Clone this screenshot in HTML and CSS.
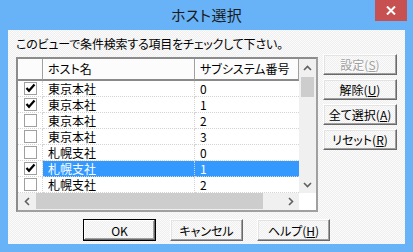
FILE: index.html
```html
<!DOCTYPE html>
<html lang="ja">
<head>
<meta charset="utf-8">
<title>ホスト選択</title>
<link rel="stylesheet" href="styles.css">
</head>
<body>
<div class="window">
  <div class="titlebar">
    <span class="title">ホスト選択</span>
    <button class="close" aria-label="閉じる">
      <svg width="10" height="9" viewBox="0 0 10 9"><path d="M1 0.5 L9 8.5 M9 0.5 L1 8.5" stroke="#fff" stroke-width="2" fill="none"/></svg>
    </button>
  </div>
  <div class="client">
    <div class="prompt">このビューで条件検索する項目をチェックして下さい。</div>
    <div class="main">
      <div class="list">
        <div class="view">
          <div class="row head">
            <div class="cell chk"></div>
            <div class="cell name">ホスト名</div>
            <div class="cell sub">サブシステム番号</div>
          </div>
          <div class="row">
            <div class="cell chk"><span class="box on"><svg viewBox="0 0 11 11"><path d="M1.5 5 L4 7.8 L9.5 1.5" /></svg></span></div>
            <div class="cell name">東京本社</div>
            <div class="cell sub">0</div>
          </div>
          <div class="row">
            <div class="cell chk"><span class="box on"><svg viewBox="0 0 11 11"><path d="M1.5 5 L4 7.8 L9.5 1.5" /></svg></span></div>
            <div class="cell name">東京本社</div>
            <div class="cell sub">1</div>
          </div>
          <div class="row">
            <div class="cell chk"><span class="box"></span></div>
            <div class="cell name">東京本社</div>
            <div class="cell sub">2</div>
          </div>
          <div class="row">
            <div class="cell chk"><span class="box"></span></div>
            <div class="cell name">東京本社</div>
            <div class="cell sub">3</div>
          </div>
          <div class="row">
            <div class="cell chk"><span class="box"></span></div>
            <div class="cell name">札幌支社</div>
            <div class="cell sub">0</div>
          </div>
          <div class="row selected">
            <div class="cell chk"><span class="box on"><svg viewBox="0 0 11 11"><path d="M1.5 5 L4 7.8 L9.5 1.5" /></svg></span></div>
            <div class="cell name">札幌支社</div>
            <div class="cell sub">1</div>
          </div>
          <div class="row">
            <div class="cell chk"><span class="box"></span></div>
            <div class="cell name">札幌支社</div>
            <div class="cell sub">2</div>
          </div>
        </div>
        <div class="vscroll">
          <span class="arrow"><svg width="9" height="6" viewBox="0 0 9 6"><path d="M1 5 L4.5 1.5 L8 5" /></svg></span>
          <div class="vtrack"><span class="vthumb"></span></div>
          <span class="arrow"><svg width="9" height="6" viewBox="0 0 9 6"><path d="M1 1 L4.5 4.5 L8 1" /></svg></span>
        </div>
        <div class="hscroll">
          <span class="harrow"><svg width="6" height="9" viewBox="0 0 6 9"><path d="M5 1 L1.5 4.5 L5 8" /></svg></span>
          <div class="htrack"><span class="hthumb"></span></div>
          <span class="harrow"><svg width="6" height="9" viewBox="0 0 6 9"><path d="M1 1 L4.5 4.5 L1 8" /></svg></span>
        </div>
        <div class="corner"></div>
      </div>
      <div class="side">
        <button class="btn disabled">設定(<u>S</u>)</button>
        <button class="btn">解除(<u>U</u>)</button>
        <button class="btn">全て選択(<u>A</u>)</button>
        <button class="btn">リセット(<u>R</u>)</button>
      </div>
    </div>
    <div class="footer">
      <button class="btn wide default">OK</button>
      <button class="btn wide">キャンセル</button>
      <button class="btn wide">ヘルプ(<u>H</u>)</button>
    </div>
  </div>
</div>
</body>
</html>
```
FILE: styles.css
```css
* { box-sizing: border-box; }
html, body { margin: 0; padding: 0; }
body {
  width: 413px;
  height: 252px;
  overflow: hidden;
  font-family: "Noto Sans CJK JP", "Noto Sans", sans-serif;
  font-size: 12px;
  font-feature-settings: "palt";
  color: #000;
}
.window {
  width: 413px;
  height: 252px;
  background: #68b2f8;
  display: flex;
  flex-direction: column;
}
.titlebar {
  height: 30px;
  display: grid;
  grid-template-columns: 1fr auto 1fr;
  align-items: start;
}
.title {
  grid-column: 2;
  font-size: 15px;
  line-height: 30px;
  color: #1a1a1a;
  letter-spacing: 0.3px;
}
.close {
  grid-column: 3;
  justify-self: end;
  margin-right: 6px;
  width: 32px;
  height: 21px;
  border: 0;
  padding: 0;
  background: #c75050;
  display: flex;
  align-items: center;
  justify-content: center;
}
.close svg { display: block; }
.client {
  flex: 1;
  margin: 0 8px 8px;
  background: repeating-conic-gradient(#efefef 0 25%, #fbfbfb 0 50%) 0 0 / 2px 2px;
  display: flex;
  flex-direction: column;
}
.prompt {
  padding: 6px 8px 0;
  line-height: 16px;
  height: 22px;
  letter-spacing: -0.2px;
}
.main {
  display: flex;
  padding: 2px 8px 0;
  align-items: flex-start;
}
.list {
  margin-top: 3px;
  width: 302px;
  height: 155px;
  border: 2px solid;
  border-color: #8c8c8c #a0a0a0 #a0a0a0 #8c8c8c;
  background: #fff;
  display: grid;
  grid-template-columns: 281px 17px;
  grid-template-rows: 134px 17px;
}
.view {
  display: flex;
  flex-direction: column;
  overflow: hidden;
}
.row {
  display: grid;
  grid-template-columns: 25px 152px 104px;
  height: 16px;
  line-height: 15px;
}
.row .cell {
  border-bottom: 1px dotted #d4d4d4;
  border-right: 1px dotted #d4d4d4;
  white-space: nowrap;
  overflow: hidden;
}
.row .cell.sub { border-right: 0; }
.row .name, .row .sub { padding-left: 5px; }
.row.head {
  height: 22px;
  line-height: 20px;
}
.row.head .cell {
  background: #fcfcfc;
  border-right: 1px solid #a0a0a0;
  border-bottom: 2px solid #8a8a8a;
  box-shadow: inset 1px 0 #fff;
}
.row.head .sub { border-right: 1px solid #a0a0a0; }
.chk {
  display: flex;
  align-items: center;
  justify-content: center;
}
.box {
  width: 13px;
  height: 13px;
  border: 1px solid #a0a0a0;
  background: #fff;
  display: block;
  margin-left: 1px;
}
.box svg {
  display: block;
  width: 11px;
  height: 11px;
  fill: none;
  stroke: #000;
  stroke-width: 2.2;
}
.row.selected .name, .row.selected .sub {
  background: #3399ff;
  color: #fff;
}
.vscroll {
  background: #f0f0f0;
  display: flex;
  flex-direction: column;
  align-items: center;
}
.arrow {
  height: 17px;
  width: 17px;
  display: flex;
  align-items: center;
  justify-content: center;
}
.arrow svg, .harrow svg { fill: none; stroke: #606060; stroke-width: 1.6; display: block; }
.vtrack { flex: 1; width: 100%; padding: 1px 2px; }
.vthumb { display: block; height: 20px; background: #cdcdcd; }
.hscroll {
  background: #f0f0f0;
  display: flex;
  align-items: stretch;
}
.harrow {
  width: 17px;
  display: flex;
  align-items: center;
  justify-content: center;
}
.htrack { flex: 1; padding: 0 1px; }
.hthumb { display: block; height: 16px; width: 227px; background: #cdcdcd; }
.corner { background: transparent; }
.side {
  margin-left: 5px;
  display: flex;
  flex-direction: column;
  gap: 4px;
}
.btn {
  width: 74px;
  height: 21px;
  padding: 0;
  font: inherit;
  font-feature-settings: "palt";
  color: #000;
  background: repeating-conic-gradient(#efefef 0 25%, #fbfbfb 0 50%) 0 0 / 2px 2px;
  border: 1px solid;
  border-color: #fff #696969 #696969 #fff;
  box-shadow: inset -1px -1px #a0a0a0, inset 1px 1px #e3e3e3;
  line-height: 17px;
}
.btn u { text-underline-offset: 1px; }
.btn.disabled { color: #a0a0a0; text-shadow: 1px 1px #fff; }
.footer {
  margin-top: 7px;
  display: flex;
  justify-content: center;
  gap: 14px;
}
.btn.wide { width: 73px; height: 22px; }
.btn.default {
  border: 1px solid #000;
  box-shadow: inset -1px -1px #696969, inset 1px 1px #fff, inset -2px -2px #a0a0a0;
}
```
